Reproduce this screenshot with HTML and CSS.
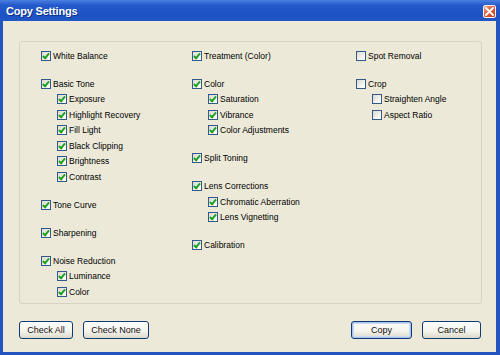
FILE: index.html
```html
<!DOCTYPE html>
<html lang="en">

<head>
    <meta charset="UTF-8">
    <title>Copy Settings</title>
    <link rel="stylesheet" href="styles.css">
</head>

<body>
    <div class="window">
        <div class="titleBar">
            <span class="titleText">Copy Settings</span>
            <span class="closeBtn">
                <svg width="9" height="9" viewBox="0 0 9 9">
                    <path d="M1 1 L8 8 M8 1 L1 8" stroke="#fff" stroke-width="1.8" stroke-linecap="round" />
                </svg>
            </span>
        </div>
        <div class="frame">
            <div class="groupBox">
                <div class="col colOne">
                    <div class="group">
                        <div class="row"><span class="box on"></span>White Balance</div>
                    </div>
                    <div class="group">
                        <div class="row"><span class="box on"></span>Basic Tone</div>
                        <div class="row sub"><span class="box on"></span>Exposure</div>
                        <div class="row sub"><span class="box on"></span>Highlight Recovery</div>
                        <div class="row sub"><span class="box on"></span>Fill Light</div>
                        <div class="row sub"><span class="box on"></span>Black Clipping</div>
                        <div class="row sub"><span class="box on"></span>Brightness</div>
                        <div class="row sub"><span class="box on"></span>Contrast</div>
                    </div>
                    <div class="group">
                        <div class="row"><span class="box on"></span>Tone Curve</div>
                    </div>
                    <div class="group">
                        <div class="row"><span class="box on"></span>Sharpening</div>
                    </div>
                    <div class="group">
                        <div class="row"><span class="box on"></span>Noise Reduction</div>
                        <div class="row sub"><span class="box on"></span>Luminance</div>
                        <div class="row sub"><span class="box on"></span>Color</div>
                    </div>
                </div>
                <div class="col colTwo">
                    <div class="group">
                        <div class="row"><span class="box on"></span>Treatment (Color)</div>
                    </div>
                    <div class="group">
                        <div class="row"><span class="box on"></span>Color</div>
                        <div class="row sub"><span class="box on"></span>Saturation</div>
                        <div class="row sub"><span class="box on"></span>Vibrance</div>
                        <div class="row sub"><span class="box on"></span>Color Adjustments</div>
                    </div>
                    <div class="group">
                        <div class="row"><span class="box on"></span>Split Toning</div>
                    </div>
                    <div class="group">
                        <div class="row"><span class="box on"></span>Lens Corrections</div>
                        <div class="row sub"><span class="box on"></span>Chromatic Aberration</div>
                        <div class="row sub"><span class="box on"></span>Lens Vignetting</div>
                    </div>
                    <div class="group">
                        <div class="row"><span class="box on"></span>Calibration</div>
                    </div>
                </div>
                <div class="col colThree">
                    <div class="group">
                        <div class="row"><span class="box"></span>Spot Removal</div>
                    </div>
                    <div class="group">
                        <div class="row"><span class="box"></span>Crop</div>
                        <div class="row sub"><span class="box"></span>Straighten Angle</div>
                        <div class="row sub"><span class="box"></span>Aspect Ratio</div>
                    </div>
                </div>
            </div>
            <div class="buttonRow">
                <div class="buttonSet">
                    <button class="xpBtn checkAll">Check All</button>
                    <button class="xpBtn checkNone">Check None</button>
                </div>
                <div class="buttonSet">
                    <button class="xpBtn copyBtn">Copy</button>
                    <button class="xpBtn cancelBtn">Cancel</button>
                </div>
            </div>
        </div>
    </div>
</body>

</html>
```

FILE: styles.css
```css
* {
    margin: 0;
    padding: 0;
    box-sizing: border-box;
}

body {
    width: 500px;
    height: 355px;
    overflow: hidden;
    background-color: #ece9d8;
    font-family: "Liberation Sans", Arial, sans-serif;
}

.window {
    width: 500px;
    height: 355px;
    display: flex;
    flex-direction: column;
}

.titleBar {
    height: 21px;
    display: flex;
    align-items: center;
    justify-content: space-between;
    padding: 0 4px 0 6px;
    background: linear-gradient(#4a7fe0, #2459cc 25%, #1d52c4 75%, #2156c6);
}

.titleText {
    color: white;
    font-weight: bold;
    font-size: 11px;
    letter-spacing: -0.2px;
    text-shadow: 1px 1px 0 #0c2f86;
}

.closeBtn {
    width: 13px;
    height: 13px;
    margin-top: 1px;
    display: flex;
    align-items: center;
    justify-content: center;
    border: 1px solid #f4f4f4;
    border-radius: 2px;
    background: linear-gradient(135deg, #f0a48a, #db5a35 50%, #c9421c);
}

.frame {
    flex: 1;
    display: flex;
    flex-direction: column;
    background-color: #ece9d8;
    border-left: 3px solid #2454c0;
    border-right: 4px solid #2454c0;
    border-bottom: 3px solid #2454c0;
}

.groupBox {
    height: 263px;
    margin: 20px 14px 0 16px;
    border: 1px solid #d6d3c4;
    border-radius: 3px;
    padding: 6px 0 0 21px;
    display: flex;
}

.colOne {
    width: 151px;
}

.colTwo {
    width: 164px;
}

.group {
    margin-bottom: 12.5px;
}

.row {
    height: 15.5px;
    display: flex;
    align-items: center;
    font-size: 8.5px;
    color: #000;
    white-space: nowrap;
}

.sub {
    padding-left: 16px;
}

.box {
    width: 10px;
    height: 10px;
    margin-right: 2px;
    border: 1px solid #33598a;
    background: linear-gradient(135deg, #d9d8d0, #f7f7f3 70%, #fff);
    position: relative;
    flex-shrink: 0;
}

.box.on::after {
    content: "";
    position: absolute;
    left: 2px;
    top: 0px;
    width: 2px;
    height: 5px;
    border-right: 2px solid #21a121;
    border-bottom: 2px solid #21a121;
    transform: rotate(40deg);
}

.buttonRow {
    display: flex;
    justify-content: space-between;
    margin: 17px 15px 0 16px;
}

.buttonSet {
    display: flex;
    gap: 10px;
}

.xpBtn {
    height: 18px;
    border: 1px solid #0f3b72;
    border-radius: 3px;
    background: linear-gradient(#ffffff, #f3f2ea 60%, #dcd8cb);
    font-family: "Liberation Sans", Arial, sans-serif;
    font-size: 9px;
    color: #111;
}

.checkAll {
    width: 54px;
}

.checkNone {
    width: 66px;
}

.copyBtn {
    width: 61px;
    box-shadow: inset 0 0 0 1px #a8c4ee, inset 0 0 0 2px #c9dbf7;
}

.cancelBtn {
    width: 59px;
}
```
